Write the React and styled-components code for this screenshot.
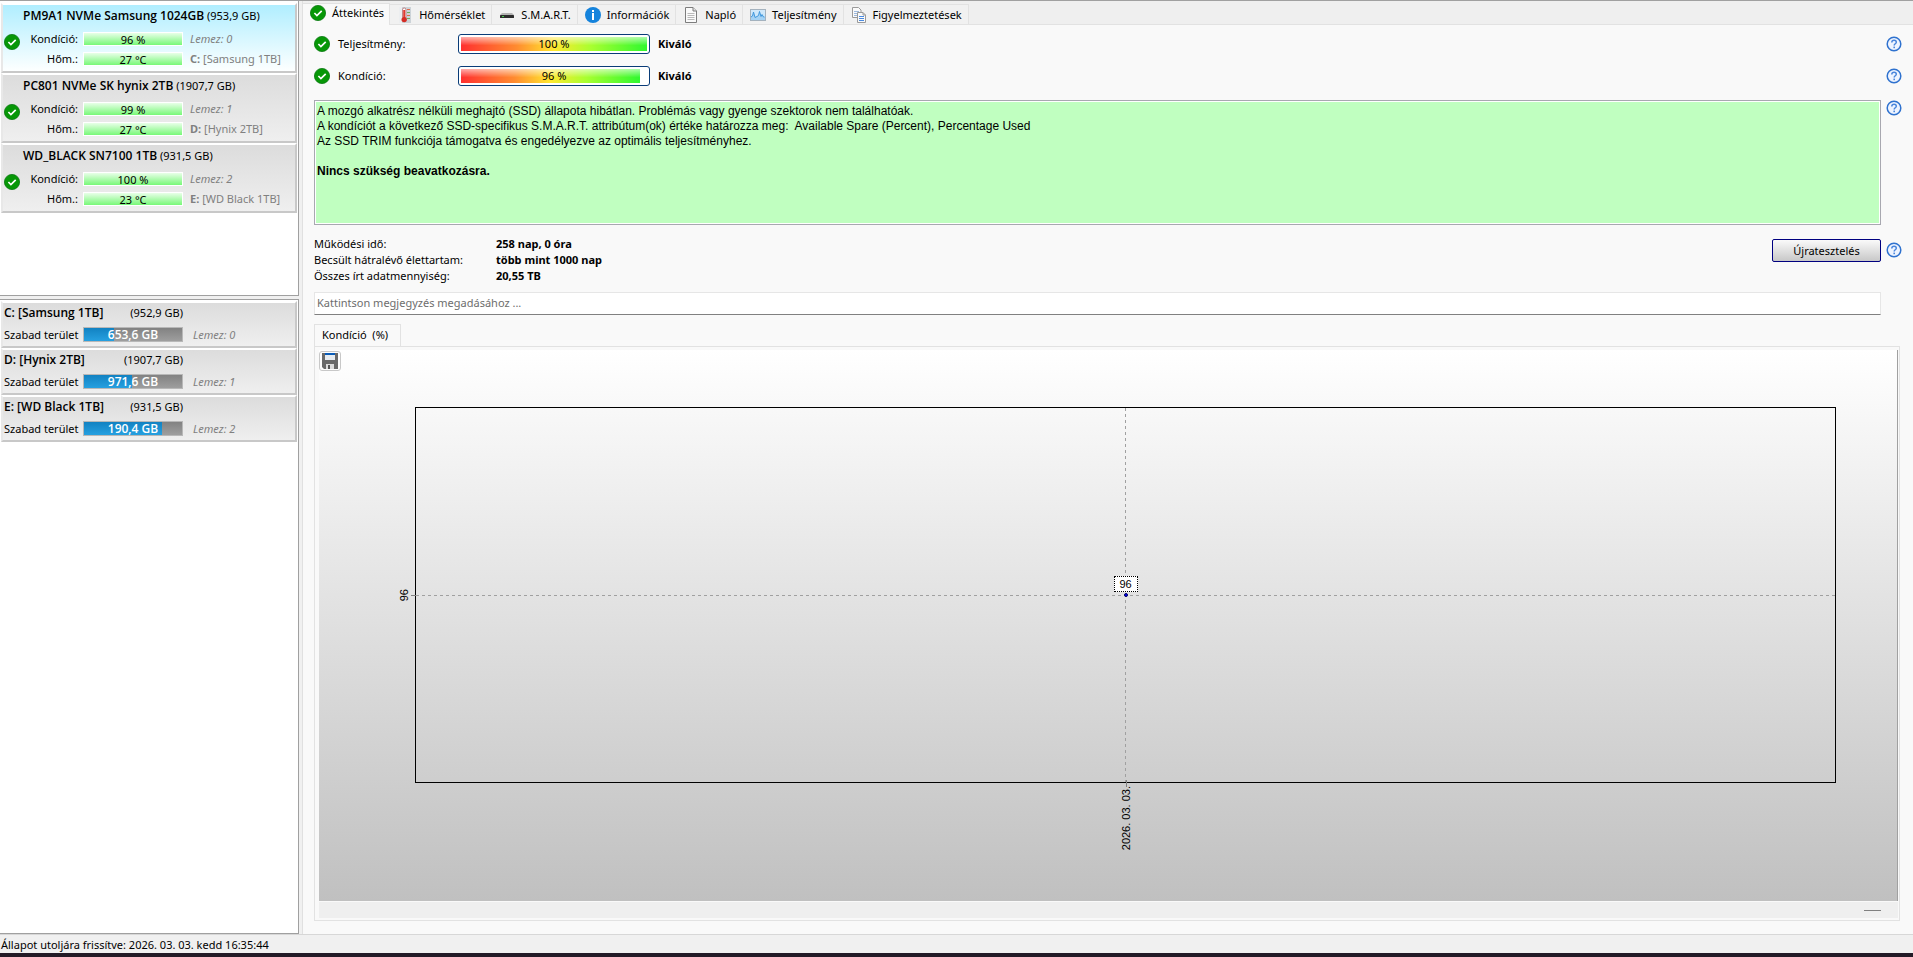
import styled, { createGlobalStyle } from "styled-components";

const GlobalStyle = createGlobalStyle`
  *, *::before, *::after {
    box-sizing: border-box;
  }
  body {
    margin: 0;
    background: #f0f0f0;
    color: #000;
    font-family: "Noto Sans", "Open Sans", sans-serif;
    font-size: 11px;
    line-height: 16px;
  }
  button, input {
    font: inherit;
    color: inherit;
  }
`

const disks = [
  { name: "PM9A1 NVMe Samsung 1024GB", size: "953,9 GB", health: 96, temp: 27, letter: "C", label: "Samsung 1TB", selected: true },
  { name: "PC801 NVMe SK hynix 2TB", size: "1907,7 GB", health: 99, temp: 27, letter: "D", label: "Hynix 2TB" },
  { name: "WD_BLACK SN7100 1TB", size: "931,5 GB", health: 100, temp: 23, letter: "E", label: "WD Black 1TB" },
]

const volumes = [
  { letter: "C", label: "Samsung 1TB", size: "952,9 GB", free: "653,6 GB", used: 31 },
  { letter: "D", label: "Hynix 2TB", size: "1907,7 GB", free: "971,6 GB", used: 49 },
  { letter: "E", label: "WD Black 1TB", size: "931,5 GB", free: "190,4 GB", used: 80 },
]

const CheckIcon = () => (
  <Icon viewBox="0 0 16 16" aria-hidden="true">
    <circle cx="8" cy="8" r="7.6" fill="#079707" stroke="#0a7a12" strokeWidth=".8" />
    <path d="M4.4 8l2.5 2.5 4.8-4.7" fill="none" stroke="#fff" strokeWidth="1.7" />
  </Icon>
)

const HelpIcon = () => (
  <Icon viewBox="0 0 16 16" aria-hidden="true">
    <circle cx="8" cy="8" r="6.8" fill="#eef4ff" stroke="#2f72cf" strokeWidth="1.5" />
    <path d="M5.8 6.4c0-1.5 1-2.2 2.3-2.2s2.2.8 2.2 2c0 1.5-2.1 1.6-2.1 3.2" fill="none" stroke="#4a86dc" strokeWidth="1.5" />
    <rect x="7.4" y="10.6" width="1.6" height="1.6" fill="#4a86dc" />
  </Icon>
)

const ThermometerIcon = () => (
  <Icon viewBox="0 0 16 16" aria-hidden="true">
    <rect x="4" y="0" width="10" height="16" fill="#ccd3d8" />
    <rect x="2" y="0" width="3" height="16" fill="#eceef0" />
    <path d="M10 2.5h3M10 8.5h3" stroke="#e06a50" />
    <path d="M10 5.5h3M10 11.5h3" stroke="#6fae5c" />
    <rect x="5.5" y="1" width="3.4" height="11" rx="1.7" fill="#fff" stroke="#a44" strokeWidth=".6" />
    <rect x="6.2" y="3" width="2" height="9" fill="#e03a30" />
    <circle cx="7.2" cy="12.6" r="2.7" fill="#d42c24" />
  </Icon>
)

const DriveIcon = () => (
  <Icon viewBox="0 0 16 16" aria-hidden="true">
    <path d="M3 6h10l2 2H1z" fill="#b4b4b4" />
    <rect x="1" y="8" width="14" height="3" rx=".5" fill="#2d2d2d" />
    <rect x="3" y="9" width="2" height="1" fill="#45d04a" />
  </Icon>
)

const InfoIcon = () => (
  <Icon viewBox="0 0 16 16" aria-hidden="true">
    <circle cx="8" cy="8" r="8" fill="#1583dc" />
    <rect x="7" y="3" width="2" height="2" fill="#fff" />
    <rect x="7" y="6" width="2" height="7" fill="#fff" />
  </Icon>
)

const PageIcon = () => (
  <Icon viewBox="0 0 16 16" aria-hidden="true">
    <path d="M2.5.5h7.5l3.5 3.5v11.5h-11z" fill="#fafafa" stroke="#7d7d7d" />
    <path d="M10 .5v3.5h3.5" fill="#e4e4e4" stroke="#7d7d7d" />
    <path d="M4.5 6.5h7M4.5 8.5h7M4.5 10.5h7M4.5 12.5h7" stroke="#b9b9b9" />
  </Icon>
)

const WaveIcon = () => (
  <Icon viewBox="0 0 16 16" aria-hidden="true">
    <rect x=".5" y="2.5" width="15" height="11" fill="#cfe8fa" stroke="#a4b2be" />
    <path d="M1 10l1.5-1 1-4 1.5 5.5 2-1 1.5-1 1-4 1.5 5 1-2 1.5 2.5h1.5v3H1z" fill="#a4d2f4" />
    <path d="M1 10l1.5-1 1-4 1.5 5.5 2-1 1.5-1 1-4 1.5 5 1-2 1.5 2.5h1" fill="none" stroke="#3f97dc" />
  </Icon>
)

const CopyIcon = () => (
  <Icon viewBox="0 0 16 16" aria-hidden="true">
    <path d="M1.5.5h6l2.500 2.500v7.500h-8.500z" fill="#fafafa" stroke="#9a9a9a" />
    <path d="M3 4.5h5M3 6.5h3M3 8.5h3" stroke="#9db9dd" />
    <path d="M6.5 5.5h5.5l2.5 2.5v7.5h-8z" fill="#fafafa" stroke="#9a9a9a" />
    <path d="M12 5.5v2.5h2.5" fill="none" stroke="#9a9a9a" />
    <path d="M8 9.5h5M8 11.5h5M8 13.5h5" stroke="#4a8ae0" />
  </Icon>
)

const SaveIcon = () => (
  <Icon viewBox="0 0 16 16" aria-hidden="true">
    <path d="M0 0h16v16H2l-2-2z" fill="#696969" />
    <rect x="3" y="0" width="10" height="7" fill="#e6ebf0" />
    <rect x="3" y="0" width="10" height="2" fill="#0a5cb8" />
    <rect x="4" y="11" width="8" height="5" fill="#dcdcdc" />
    <rect x="6" y="12" width="2" height="4" fill="#555" />
  </Icon>
)

const tabs = [
  { title: "Áttekintés", icon: CheckIcon, active: true },
  { title: "Hőmérséklet", icon: ThermometerIcon },
  { title: "S.M.A.R.T.", icon: DriveIcon },
  { title: "Információk", icon: InfoIcon },
  { title: "Napló", icon: PageIcon },
  { title: "Teljesítmény", icon: WaveIcon },
  { title: "Figyelmeztetések", icon: CopyIcon },
]

const DiskItem = ({ disk, index }) => (
  <DiskCard $selected={disk.selected}>
    <DiskTitle><Name>{disk.name}</Name> ({disk.size})</DiskTitle>
    <DiskBody>
      <CheckIcon />
      <DiskRows>
        <DiskLabel>Kondíció:</DiskLabel>
        <GreenBar>{disk.health} %</GreenBar>
        <DiskNumber>Lemez: {index}</DiskNumber>
        <DiskLabel>Hőm.:</DiskLabel>
        <GreenBar>{disk.temp} °C</GreenBar>
        <DiskVolume><strong>{disk.letter}:</strong> [{disk.label}]</DiskVolume>
      </DiskRows>
    </DiskBody>
  </DiskCard>
)

const VolumeItem = ({ volume, index }) => (
  <VolumeCard>
    <VolumeTitle>
      <Name>{volume.letter}: [{volume.label}]</Name>
      <span>({volume.size})</span>
    </VolumeTitle>
    <VolumeRow>
      <VolumeLabel>Szabad terület</VolumeLabel>
      <SpaceBar>
        <SpaceUsed style={{ width: `${volume.used}%` }} />
        <SpaceText>{volume.free}</SpaceText>
      </SpaceBar>
      <VolumeDisk>Lemez: {index}</VolumeDisk>
    </VolumeRow>
  </VolumeCard>
)

const Rating = ({ label, value, text }) => (
  <RatingRow>
    <CheckIcon />
    <RatingLabel>{label}</RatingLabel>
    <Gauge>
      <GaugeFill style={{ width: `${value}%` }} />
      <GaugeText>{value} %</GaugeText>
    </Gauge>
    <strong>{text}</strong>
    <HelpButton aria-label="Súgó"><HelpIcon /></HelpButton>
  </RatingRow>
)

const HealthChart = () => (
  <Chart>
    <SaveButton aria-label="Mentés"><SaveIcon /></SaveButton>
    <AxisY>96</AxisY>
    <Plot>
      <PlotLines aria-hidden="true">
        <line x1="0" y1="50%" x2="100%" y2="50%" />
        <line x1="50%" y1="0" x2="50%" y2="100%" />
      </PlotLines>
      <Point />
      <PointLabel>96</PointLabel>
    </Plot>
    <AxisX>2026. 03. 03.</AxisX>
  </Chart>
)

const App = () => {
  return (
    <Window>
      <GlobalStyle />
      <Main>
        <Sidebar>
          <DiskList>
            {disks.map((disk, index) => <DiskItem key={disk.name} disk={disk} index={index} />)}
          </DiskList>
          <VolumeList>
            {volumes.map((volume, index) => <VolumeItem key={volume.letter} volume={volume} index={index} />)}
          </VolumeList>
        </Sidebar>
        <Content>
          <TabBar role="tablist">
            {tabs.map(({ title, icon: TabIcon, active }) => (
              <Tab key={title} role="tab" aria-selected={!!active} $active={active}>
                <TabIcon />{title}
              </Tab>
            ))}
          </TabBar>
          <Overview>
            <Rating label="Teljesítmény:" value={100} text="Kiváló" />
            <Rating label="Kondíció:" value={96} text="Kiváló" />
            <StatusRow>
              <StatusBox>
                <p>A mozgó alkatrész nélküli meghajtó (SSD) állapota hibátlan. Problémás vagy gyenge szektorok nem találhatóak.</p>
                <p>A kondíciót a következő SSD-specifikus S.M.A.R.T. attribútum(ok) értéke határozza meg:&nbsp; Available Spare (Percent), Percentage Used</p>
                <p>Az SSD TRIM funkciója támogatva és engedélyezve az optimális teljesítményhez.</p>
                <br />
                <p><strong>Nincs szükség beavatkozásra.</strong></p>
              </StatusBox>
              <HelpButton aria-label="Súgó"><HelpIcon /></HelpButton>
            </StatusRow>
            <FactsRow>
              <Facts>
                <dt>Működési idő:</dt>
                <dd>258 nap, 0 óra</dd>
                <dt>Becsült hátralévő élettartam:</dt>
                <dd>több mint 1000 nap</dd>
                <dt>Összes írt adatmennyiség:</dt>
                <dd>20,55 TB</dd>
              </Facts>
              <RetestButton>Újratesztelés</RetestButton>
              <HelpButton aria-label="Súgó"><HelpIcon /></HelpButton>
            </FactsRow>
            <Comment aria-label="Megjegyzés" placeholder="Kattintson megjegyzés megadásához ..." />
            <ChartTabs role="tablist">
              <ChartTab role="tab" aria-selected="true">Kondíció&nbsp; (%)</ChartTab>
            </ChartTabs>
            <ChartPanel>
              <HealthChart />
              <ChartFooter><FooterMark /></ChartFooter>
            </ChartPanel>
          </Overview>
        </Content>
      </Main>
      <StatusBar>Állapot utoljára frissítve: 2026. 03. 03. kedd 16:35:44</StatusBar>
    </Window>
  )
}

const Icon = styled.svg`
  display: block;
  width: 16px;
  height: 16px;
  flex: none;
`
const Name = styled.strong`
  font-family: "Open Sans", sans-serif;
  font-size: 12px;
  font-weight: 600;
`
const Window = styled.div`
  display: flex;
  flex-direction: column;
  height: 100vh;
  border-top: 1px solid #a0a0a0;
  border-bottom: 4px solid #231a26;
`
const Main = styled.main`
  flex: 1;
  min-height: 0;
  display: flex;
  gap: 3px;
`
const Sidebar = styled.aside`
  flex: none;
  width: 299px;
  display: flex;
  flex-direction: column;
  gap: 3px;
`
const List = styled.section`
  display: flex;
  flex-direction: column;
  padding: 2px 1px 0 1px;
  background: #fff;
  border-right: 1px solid #a0a0a0;
  border-bottom: 1px solid #a0a0a0;
`
const DiskList = styled(List)`
  flex: none;
  height: 295px;
`
const VolumeList = styled(List)`
  flex: 1;
  padding-top: 1px;
  border-top: 1px solid #a0a0a0;
`
const Card = styled.article`
  border: 2px solid #fff;
  border-left-color: #e8e8e8;
  border-right-color: #c8c8c8;
  border-bottom-color: #c8c8c8;
  background: linear-gradient(#dcdcdc, #efefef);
`
const DiskCard = styled(Card)`
  height: 70px;
  padding-top: 3px;
  background: ${({ $selected }) => $selected ? "linear-gradient(#b0eeff, #fdffff)" : "linear-gradient(#dcdcdc, #efefef)"};
`
const DiskTitle = styled.div`
  height: 16px;
  padding-left: 20px;
  white-space: nowrap;
`
const DiskBody = styled.div`
  display: flex;
  gap: 4px;
  padding-top: 7px;
  ${Icon} {
    margin: 3px 0 0 1px;
  }
`
const DiskRows = styled.div`
  display: grid;
  grid-template-columns: 54px 100px 1fr;
  column-gap: 5px;
  grid-auto-rows: 20px;
  white-space: nowrap;
`
const DiskLabel = styled.span`
  text-align: right;
`
const GreenBar = styled.div`
  height: 14px;
  margin-top: 1px;
  border: 1px solid #fff;
  line-height: 13px;
  text-align: center;
  background: linear-gradient(#e8ffe8, #78f878);
`
const DiskNumber = styled.i`
  padding-left: 2px;
  color: #808080;
`
const VolumeDisk = styled(DiskNumber)`
  padding-left: 5px;
`
const DiskVolume = styled.span`
  padding-left: 2px;
  color: #808080;
`
const VolumeCard = styled(Card)`
  height: 47px;
  padding: 2px 1px 0;
`
const VolumeTitle = styled.div`
  display: flex;
  justify-content: space-between;
  width: 179px;
  height: 22px;
  white-space: nowrap;
`
const VolumeRow = styled.div`
  display: flex;
  gap: 5px;
  white-space: nowrap;
`
const VolumeLabel = styled.span`
  width: 74px;
`
const SpaceBar = styled.div`
  position: relative;
  width: 100px;
  height: 15px;
  border: 1px solid #b8b8b8;
  background: linear-gradient(#828282, #9e9e9e);
`
const SpaceUsed = styled.div`
  height: 100%;
  background: linear-gradient(#1282c2, #26a0e0);
`
const SpaceText = styled(Name)`
  position: absolute;
  inset: 0;
  line-height: 13px;
  text-align: center;
  color: #fff;
`
const Content = styled.section`
  flex: 1;
  min-width: 0;
  display: flex;
  flex-direction: column;
  border-left: 1px solid #e0e0e0;
  background: #f9f9f9;
`
const TabBar = styled.nav`
  display: flex;
  align-items: flex-end;
  height: 24px;
  padding-top: 2px;
  background: linear-gradient(#efefef, #efefef) top / 100% 23px no-repeat, #e2e2e2;
`
const Tab = styled.button`
  display: flex;
  align-items: center;
  gap: 6px;
  height: ${({ $active }) => $active ? "22px" : "20px"};
  margin-bottom: ${({ $active }) => $active ? "0" : "1px"};
  padding: ${({ $active }) => $active ? "0 5px 4px 7px" : "0 6px 0 7px"};
  border: 0;
  border-top: 1px solid #e2e2e2;
  border-right: 1px solid #e2e2e2;
  background: ${({ $active }) => $active ? "#f9f9f9" : "#f1f1f1"};
  white-space: nowrap;
`
const Overview = styled.div`
  flex: 1;
  min-height: 0;
  display: flex;
  flex-direction: column;
  padding: 3px 11px 13px 11px;
`
const RatingRow = styled.div`
  display: flex;
  align-items: center;
  gap: 8px;
  height: 32px;
`
const RatingLabel = styled.span`
  width: 112px;
`
const Gauge = styled.div`
  position: relative;
  width: 192px;
  height: 20px;
  padding: 2px;
  border: 1px solid #0a3c78;
  border-radius: 3px;
  background: #fff;
`
const GaugeFill = styled.div`
  height: 100%;
  background:
    linear-gradient(rgba(255, 255, 255, .6), rgba(255, 255, 255, 0) 60%),
    linear-gradient(90deg, #ff3030, #ff8c30 30%, #ffe830 50%, #a8ff30 70%, #30f830);
`
const GaugeText = styled.span`
  position: absolute;
  inset: 0;
  line-height: 18px;
  text-align: center;
`
const HelpButton = styled.button`
  margin-left: auto;
  padding: 0;
  border: 0;
  background: none;
`
const StatusRow = styled.div`
  display: flex;
  align-items: flex-start;
  gap: 5px;
  padding-top: 8px;
`
const StatusBox = styled.div`
  flex: 1;
  height: 125px;
  padding: 3px 2px 2px;
  border: 1px solid #a8a8b0;
  box-shadow: inset 0 0 0 1px #fff;
  background: #c0ffc0;
  font-family: "Liberation Sans", Arial, sans-serif;
  font-size: 12px;
  line-height: 15px;
  p {
    margin: 0;
  }
`
const FactsRow = styled.div`
  display: flex;
  align-items: flex-start;
  padding-top: 11px;
  ${HelpButton} {
    margin: 6px 0 0 5px;
  }
`
const Facts = styled.dl`
  flex: 1;
  display: grid;
  grid-template-columns: 182px 1fr;
  grid-auto-rows: 16px;
  margin: 0;
  dd {
    margin: 0;
    font-weight: bold;
  }
`
const RetestButton = styled.button`
  width: 109px;
  height: 23px;
  margin-top: 3px;
  padding: 0;
  border: 1px solid #000080;
  border-radius: 2px;
  background: linear-gradient(#fafafa, #c8c8c8);
`
const Comment = styled.input`
  height: 23px;
  margin: 8px 21px 0 0;
  padding: 0 2px 2px;
  border: 1px solid #e6e6e6;
  border-bottom-color: #808080;
  background: #fff;
  &::placeholder {
    color: #6d6d6d;
    opacity: 1;
  }
`
const ChartTabs = styled.div`
  display: flex;
  padding-top: 9px;
`
const ChartTab = styled.button`
  height: 22px;
  padding: 0 12px 2px 7px;
  border: 1px solid #e2e2e2;
  border-bottom: 0;
  background: #f9f9f9;
`
const ChartPanel = styled.div`
  flex: 1;
  min-height: 0;
  display: flex;
  flex-direction: column;
  margin-right: 2px;
  padding: 3px 1px 2px 4px;
  border: 1px solid #e2e2e2;
`
const Chart = styled.div`
  flex: 1;
  position: relative;
  display: grid;
  grid-template-columns: 96px 1fr 61px;
  grid-template-rows: 57px 1fr 118px;
  border-right: 1px solid #a0a0a0;
  background: linear-gradient(#fff, #c0c0c0);
  font-family: "Liberation Sans", Arial, sans-serif;
`
const SaveButton = styled.button`
  width: 22px;
  height: 20px;
  margin-top: 1px;
  padding: 1px 2px;
  border: 1px solid #c8c8c8;
  border-radius: 3px;
  background: #fdfdfd;
`
const AxisY = styled.span`
  grid-area: 2 / 1;
  place-self: center end;
  margin-right: 3px;
  writing-mode: vertical-rl;
  transform: rotate(180deg);
`
const AxisX = styled.span`
  grid-area: 3 / 2;
  place-self: start center;
  padding-bottom: 3px;
  writing-mode: vertical-rl;
  transform: rotate(180deg);
`
const Plot = styled.div`
  grid-area: 2 / 2;
  position: relative;
  border: 1px solid #000;
  /* axis ticks */
  &::before, &::after {
    content: "";
    position: absolute;
    background: #808080;
  }
  &::before {
    left: -5px;
    top: 50%;
    width: 7px;
    height: 1px;
  }
  &::after {
    left: 50%;
    bottom: -5px;
    width: 1px;
    height: 7px;
  }
`
const PlotLines = styled.svg`
  display: block;
  position: absolute;
  width: 100%;
  height: 100%;
  line {
    stroke: #a0a0a0;
    stroke-dasharray: 3 3;
    shape-rendering: crispEdges;
  }
`
const Point = styled.div`
  position: absolute;
  left: calc(50% - 2px);
  top: calc(50% - 2px);
  width: 4px;
  height: 4px;
  border: 1px solid #000060;
  border-radius: 2px;
  background: #0000ff;
`
const PointLabel = styled.span`
  position: absolute;
  left: calc(50% - 12px);
  bottom: calc(50% + 3px);
  width: 24px;
  border: 1px dotted #000;
  background: #fff;
  line-height: 14px;
  text-align: center;
`
const ChartFooter = styled.footer`
  display: flex;
  justify-content: flex-end;
  align-items: center;
  height: 16px;
  margin-top: 1px;
  padding-right: 17px;
  background: #efefef;
`
const FooterMark = styled.hr`
  width: 17px;
  margin: 0;
  border: 0;
  border-top: 1px solid #808080;
`
const StatusBar = styled.footer`
  height: 19px;
  padding: 1px 0 0 1px;
  border-top: 1px solid #d7d7d7;
  background: #f0f0f0;
  line-height: 18px;
`

export default App
